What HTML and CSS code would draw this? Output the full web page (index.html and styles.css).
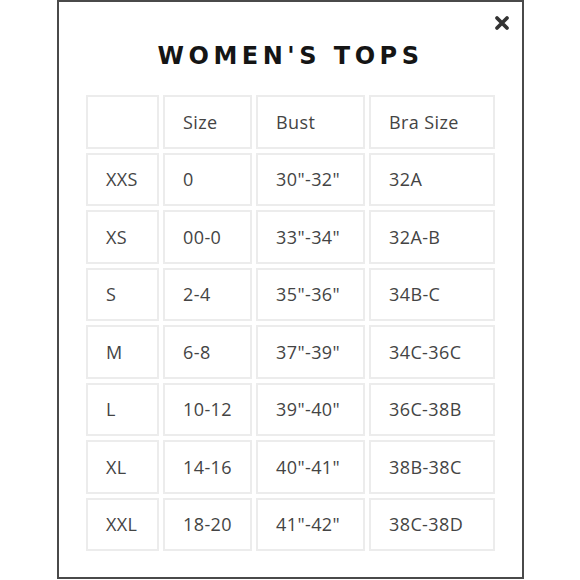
FILE: index.html
```html
<!DOCTYPE html>
<html lang="en">
<head>
<meta charset="utf-8">
<title>Women's Tops Size Chart</title>
<link rel="stylesheet" href="styles.css">
</head>
<body>
<div class="modal">
  <button class="close" aria-label="Close">
    <svg viewBox="0 0 16 16" width="16" height="16">
      <path d="M3 3 L13 13 M13 3 L3 13" stroke="#333" stroke-width="3.8" stroke-linecap="round"/>
    </svg>
  </button>
  <h2 class="title">WOMEN'S TOPS</h2>
  <table class="chart">
    <colgroup>
      <col class="c1"><col class="c2"><col class="c3"><col class="c4">
    </colgroup>
    <thead>
      <tr><th></th><th>Size</th><th>Bust</th><th>Bra Size</th></tr>
    </thead>
    <tbody>
      <tr><td>XXS</td><td>0</td><td>30"-32"</td><td>32A</td></tr>
      <tr><td>XS</td><td>00-0</td><td>33"-34"</td><td>32A-B</td></tr>
      <tr><td>S</td><td>2-4</td><td>35"-36"</td><td>34B-C</td></tr>
      <tr><td>M</td><td>6-8</td><td>37"-39"</td><td>34C-36C</td></tr>
      <tr><td>L</td><td>10-12</td><td>39"-40"</td><td>36C-38B</td></tr>
      <tr><td>XL</td><td>14-16</td><td>40"-41"</td><td>38B-38C</td></tr>
      <tr><td>XXL</td><td>18-20</td><td>41"-42"</td><td>38C-38D</td></tr>
    </tbody>
  </table>
</div>
</body>
</html>
```
FILE: styles.css
```css
html, body {
  margin: 0;
  padding: 0;
  background: #ffffff;
}

body {
  width: 580px;
  height: 580px;
  overflow: hidden;
}

.modal {
  position: relative;
  box-sizing: border-box;
  margin-left: 57px;
  width: 467px;
  height: 579px;
  border: 2px solid #4a4a4a;
  background: #ffffff;
  padding-top: 40px;
}

.close {
  position: absolute;
  top: 13px;
  right: 12px;
  width: 16px;
  height: 16px;
  padding: 0;
  border: 0;
  background: none;
  display: flex;
}

.title {
  margin: 0 0 21px 0;
  text-align: center;
  font-family: "DejaVu Sans", sans-serif;
  font-weight: bold;
  font-size: 24px;
  line-height: 28px;
  letter-spacing: 4.5px;
  color: #151515;
}

.chart {
  margin: 0 auto;
  table-layout: fixed;
  border-collapse: separate;
  border-spacing: 4px;
  font-family: "Open Sans", sans-serif;
  font-size: 18px;
  color: #444444;
}

.c1 { width: 73px; }
.c2 { width: 89px; }
.c3 { width: 109px; }
.c4 { width: 126px; }

.chart th,
.chart td {
  box-sizing: border-box;
  height: 53.5px;
  padding: 0 0 0 18px;
  border: 2px solid #ececec;
  text-align: left;
  font-weight: normal;
  vertical-align: middle;
  letter-spacing: 0.4px;
}
```
